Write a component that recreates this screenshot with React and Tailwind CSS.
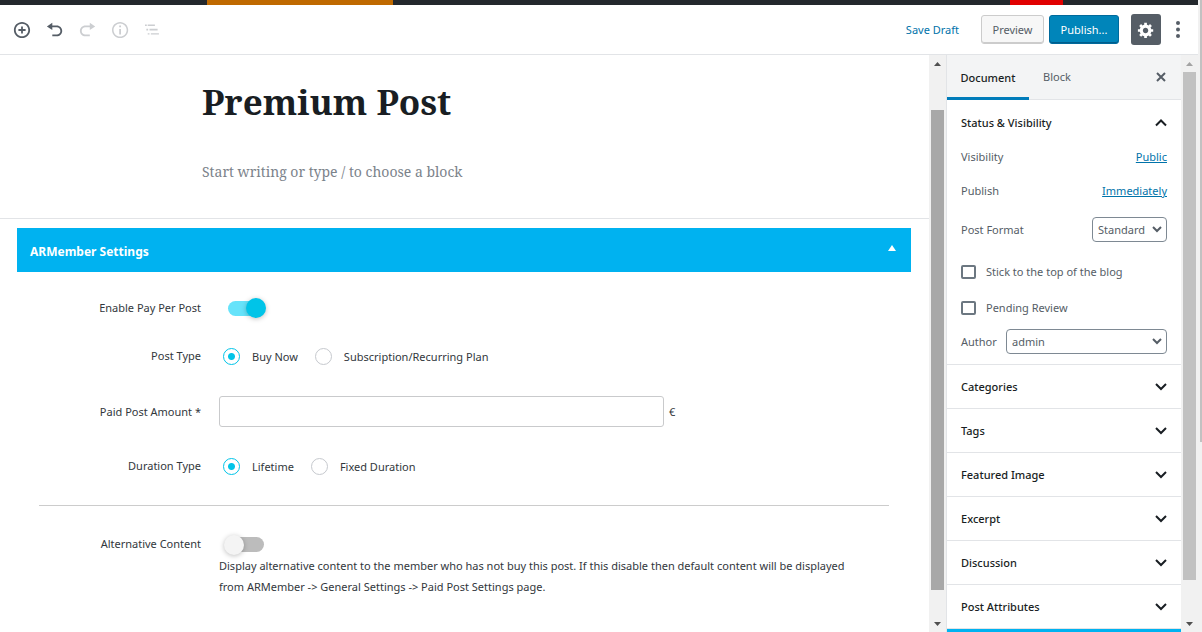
const topTools = [
  {
    label: "Add block",
    color: "text-[#555d66]",
    d: "M10 1c-5 0-9 4-9 9s4 9 9 9 9-4 9-9-4-9-9-9zm0 16c-3.9 0-7-3.1-7-7s3.1-7 7-7 7 3.1 7 7-3.1 7-7 7zm1-11H9v3H6v2h3v3h2v-3h3V9h-3V6z",
  },
  {
    label: "Undo",
    color: "text-[#555d66]",
    d: "M12 5H7V2L1 6l6 4V7h5c2.200 0 4 1.800 4 4s-1.800 4-4 4H7v2h5c3.300 0 6-2.700 6-6s-2.700-6-6-6z",
  },
  {
    label: "Redo",
    color: "text-[#ccced1]",
    d: "M7 5h5V2l6 4-6 4V7H7c-2.200 0-4 1.800-4 4s1.800 4 4 4h5v2H7c-3.300 0-6-2.700-6-6s2.700-6 6-6z",
  },
  {
    label: "Content structure",
    color: "text-[#ccced1]",
    d: "M9 1C4 1 0 5 0 10s4 9 9 9 9-4 9-9-4-9-9-9zm0 16.300c-4 0-7.300-3.300-7.300-7.300S5 2.700 9 2.700s7.300 3.300 7.300 7.300-3.300 7.300-7.300 7.300zM8 9h2v6H8zM8 5h2v2H8z",
  },
  {
    label: "Block navigation",
    color: "text-[#ccced1]",
    d: "M0 4h2v1.500H0zM3 4h8v1.500H3zM1.500 8.500h2v2h-2zM5 8.500h9v2H5zM3 13.500h2V15H3zM6.500 13.500h9V15h-9z",
  },
];

function ScrollBar({ thumb, upColor }) {
  return (
    <div aria-hidden="true" className="flex w-[17px] shrink-0 flex-col items-center bg-[#f1f1f1]">
      <svg viewBox="0 0 17 17" className={"h-[17px] w-[17px] shrink-0 " + upColor} fill="currentColor">
        <path d="M5 11h7L8.500 7z" />
      </svg>
      <div className="flex w-[13px] flex-1 flex-col">{thumb}</div>
      <svg viewBox="0 0 17 17" className="h-[17px] w-[17px] shrink-0 text-[#505050]" fill="currentColor">
        <path d="M5 7h7l-3.500 4z" />
      </svg>
    </div>
  );
}

function Chevron({ up }) {
  return (
    <svg viewBox="0 0 12 8" className="h-2 w-3" fill="none" stroke="currentColor" strokeWidth="2">
      <path d={up ? "M1 6.500l5-5 5 5" : "M1 1l5 5 5-5"} />
    </svg>
  );
}

function Row({ label, htmlFor, className, children }) {
  return (
    <div className={"flex " + className}>
      <label htmlFor={htmlFor} className="w-[201px] shrink-0 text-right">
        {label}
      </label>
      {children}
    </div>
  );
}

function Radio({ name, label, defaultChecked }) {
  return (
    <label className="flex items-center gap-3">
      <input
        type="radio"
        name={name}
        defaultChecked={defaultChecked}
        className="h-[17px] w-[17px] appearance-none rounded-full border border-[#c6c9ce] bg-white checked:border-[#00c4e8] checked:bg-[radial-gradient(circle,#00c4e8_0_3px,#ffffff_4px)]"
      />
      <span className="pt-px">{label}</span>
    </label>
  );
}

function Select({ id, value, className }) {
  return (
    <span className={"grid items-center " + className}>
      <select
        id={id}
        className="col-start-1 row-start-1 h-[25px] w-full appearance-none rounded border border-[#7e8993] bg-white px-[5px] text-[11px] text-[#555d66]"
      >
        <option>{value}</option>
      </select>
      <svg
        viewBox="0 0 10 7"
        className="pointer-events-none col-start-1 row-start-1 mr-[5px] h-[7px] w-[10px] justify-self-end text-[#555d66]"
        fill="none"
        stroke="currentColor"
        strokeWidth="2"
      >
        <path d="M1 1l4 4 4-4" />
      </svg>
    </span>
  );
}

const panels = ["Categories", "Tags", "Featured Image", "Excerpt", "Discussion", "Post Attributes"];

export default function App() {
  return (
    <div className="flex h-screen overflow-hidden bg-white font-['Noto_Sans','Open_Sans',sans-serif] text-[11px] leading-[20px] text-[#555d66]">
      <div className="flex min-w-0 flex-1 flex-col">
        <div className="flex h-[5px] shrink-0 bg-[#23282d]">
          <div className="ml-[207px] w-[186px] bg-[#bf6900]" />
          <div className="mr-[135px] ml-auto w-[53px] bg-[#e10000]" />
        </div>

        <header className="flex h-[50px] shrink-0 items-center border-b border-[#e2e4e7] pr-[15px] pl-3">
          <div className="flex gap-[13px]">
            {topTools.map((tool) => (
              <button key={tool.label} aria-label={tool.label} className={tool.color}>
                <svg viewBox="0 0 20 20" className="h-5 w-5 p-px" fill="currentColor">
                  <path d={tool.d} />
                </svg>
              </button>
            ))}
          </div>
          <div className="ml-auto flex items-center">
            <button className="mr-[22px] text-[#0073aa]">Save Draft</button>
            <button className="mr-[5px] h-[29px] w-[63px] rounded-[3px] border border-[#ccc] bg-[#f7f7f7] shadow-[inset_0_-1px_0_#ccc]">
              Preview
            </button>
            <button className="mr-3 h-[29px] w-[70px] rounded-[3px] border border-[#006a9c] bg-[#0085ba] text-white shadow-[inset_0_-1px_0_#005d8c]">
              Publish...
            </button>
            <button aria-label="Settings" className="mr-3 flex h-[31px] w-[30px] items-center justify-center rounded-[3px] bg-[#555d66] text-white">
              <svg viewBox="0 0 20 20" className="h-[18px] w-[18px]" fill="currentColor">
                <path d="M18 12h-2.180c-.170.700-.440 1.350-.810 1.930l1.540 1.540-2.100 2.100-1.540-1.540c-.580.360-1.230.630-1.910.790V19H8v-2.180c-.680-.160-1.330-.430-1.910-.790l-1.540 1.540-2.120-2.120 1.540-1.540c-.360-.580-.630-1.230-.790-1.910H1V9.030h2.170c.160-.700.440-1.350.800-1.940L2.430 5.550l2.100-2.100 1.540 1.540c.580-.370 1.240-.640 1.930-.810V2h3v2.180c.680.160 1.330.430 1.910.790l1.540-1.540 2.120 2.120-1.540 1.540c.360.590.640 1.240.800 1.940H18V12zm-8.500 1.500c1.660 0 3-1.340 3-3s-1.340-3-3-3-3 1.340-3 3 1.340 3 3 3z" />
              </svg>
            </button>
            <button aria-label="More tools" className="text-[#555d66]">
              <svg viewBox="0 0 10 20" className="h-5 w-[10px]" fill="currentColor">
                <circle cx="5" cy="3" r="2" />
                <circle cx="5" cy="9.500" r="2" />
                <circle cx="5" cy="16" r="2" />
              </svg>
            </button>
          </div>
        </header>

        <div className="flex min-h-0 flex-1">
          <main className="min-w-0 flex-1 overflow-hidden text-[#32373c]">
            <section className="h-[164px] border-b border-[#e2e4e7] pt-[23px] pl-[202px] font-['Noto_Serif','DejaVu_Serif',serif]">
              <h1 className="text-[35px] leading-[48px] font-bold text-[#191e23]">Premium Post</h1>
              <p className="mt-[34px] text-[14px] leading-[24px] text-[#7c838b]">
                Start writing or type / to choose a block
              </p>
            </section>

            <section className="mt-[9px] mr-[18px] ml-[17px]">
              <div className="flex h-[44px] items-center justify-between bg-[#00b2f0] pr-[15px] pl-[13px] text-white">
                <h2 className="pt-[3px] text-[12px] font-bold">ARMember Settings</h2>
                <button aria-label="Collapse ARMember Settings" className="pb-1">
                  <svg viewBox="0 0 8 6" className="h-[6px] w-2" fill="currentColor">
                    <path d="M0 6h8L4 0z" />
                  </svg>
                </button>
              </div>
            </section>

            <form>
              <Row label="Enable Pay Per Post" htmlFor="pay-per-post" className="mt-[26px]">
                <input
                  id="pay-per-post"
                  type="checkbox"
                  role="switch"
                  defaultChecked
                  className="ml-[27px] flex h-[15px] w-[36px] appearance-none items-center self-center rounded-full bg-[#bcbcbc] before:h-5 before:w-5 before:shrink-0 before:rounded-full before:bg-[#f4f4f4] before:shadow-[0_1px_5px_rgba(0,0,0,0.25)] checked:bg-[#66e3fa] checked:before:ml-[18px] checked:before:bg-[#00c4e8]"
                />
              </Row>
              <Row label="Post Type" className="mt-7">
                <div className="ml-[22px] flex gap-[17px]">
                  <Radio name="post-type" label="Buy Now" defaultChecked />
                  <Radio name="post-type" label="Subscription/Recurring Plan" />
                </div>
              </Row>
              <Row label="Paid Post Amount *" htmlFor="amount" className="mt-[29px] items-center">
                <input id="amount" type="text" className="ml-[18px] h-[31px] w-[445px] rounded-[3px] border border-[#c9cacc] px-2" />
                <span className="ml-[5px]">€</span>
              </Row>
              <Row label="Duration Type" className="mt-[29px]">
                <div className="ml-[22px] flex gap-[17px]">
                  <Radio name="duration" label="Lifetime" defaultChecked />
                  <Radio name="duration" label="Fixed Duration" />
                </div>
              </Row>
              <hr className="mt-7 mr-10 ml-[39px] border-[#cccccc]" />
              <Row label="Alternative Content" htmlFor="alt-content" className="mt-7">
                <div className="ml-[18px] pr-[60px]">
                  <div className="flex h-[21px] items-center pl-[9px]">
                    <input
                      id="alt-content"
                      type="checkbox"
                      role="switch"
                      className="flex h-[15px] w-[36px] appearance-none items-center rounded-full bg-[#bcbcbc] before:-ml-1 before:h-5 before:w-5 before:shrink-0 before:rounded-full before:bg-[#f4f4f4] before:shadow-[0_1px_5px_rgba(0,0,0,0.25)]"
                    />
                  </div>
                  <p className="leading-[21px]">
                    Display alternative content to the member who has not buy this post. If this disable then default
                    content will be displayed from ARMember -&gt; General Settings -&gt; Paid Post Settings page.
                  </p>
                </div>
              </Row>
            </form>
          </main>

          <ScrollBar upColor="text-[#505050]" thumb={<div className="mt-[38px] mb-[25px] flex-1 bg-[#a8a8a8]" />} />

          <aside className="flex w-[235px] shrink-0 flex-col overflow-hidden border-l border-[#e2e4e7] text-[#555d66]">
            <div className="flex h-[45px] shrink-0 border-b border-[#e2e4e7] bg-[#f3f4f5]">
              <button className="-mb-px w-[82px] border-b-[3px] border-[#007cba] pt-[3px] font-medium text-[#191e23]">Document</button>
              <button className="ml-[14px]">Block</button>
              <button aria-label="Close settings" className="mr-[15px] ml-auto">
                <svg viewBox="0 0 10 10" className="h-[10px] w-[10px]" stroke="currentColor" strokeWidth="2">
                  <path d="M1 1l8 8M9 1l-8 8" />
                </svg>
              </button>
            </div>

            <section className="shrink-0 border-b border-[#e2e4e7] pr-[14px] pb-[10px] pl-[14px]">
              <button className="flex h-[45px] w-full items-center justify-between text-[#191e23]">
                <span className="font-medium">Status &amp; Visibility</span>
                <Chevron up />
              </button>
              <div className="mt-[2px] flex justify-between">
                <span>Visibility</span>
                <a href="#visibility" className="text-[#0073aa] underline">Public</a>
              </div>
              <div className="mt-[14px] flex justify-between">
                <span>Publish</span>
                <a href="#publish" className="text-[#0073aa] underline">Immediately</a>
              </div>
              <div className="mt-4 flex items-center justify-between">
                <label htmlFor="format">Post Format</label>
                <Select id="format" value="Standard" className="w-[75px]" />
              </div>
              <label className="mt-5 flex items-center gap-[10px]">
                <input type="checkbox" className="h-[14px] w-[15px] appearance-none rounded-[2px] border-2 border-[#6c7781]" />
                Stick to the top of the blog
              </label>
              <label className="mt-4 flex items-center gap-[10px]">
                <input type="checkbox" className="h-[14px] w-[15px] appearance-none rounded-[2px] border-2 border-[#6c7781]" />
                Pending Review
              </label>
              <div className="mt-[11px] flex items-center">
                <label htmlFor="author" className="w-[45px]">Author</label>
                <Select id="author" value="admin" className="flex-1" />
              </div>
            </section>

            {panels.map((name) => (
              <button
                key={name}
                className="flex h-11 shrink-0 items-center justify-between border-b border-[#e2e4e7] px-[14px] font-medium text-[#191e23]"
              >
                {name}
                <Chevron />
              </button>
            ))}
            <div className="h-[3px] shrink-0 bg-[#00b2f0]" />
          </aside>

          <ScrollBar upColor="text-[#a3a3a3]" thumb={<div className="mb-[35px] flex-1 bg-[#c1c1c1]" />} />
        </div>
      </div>
      <div aria-hidden="true" className="flex w-1 shrink-0 justify-end bg-[#f1f1f1]">
        <div className="h-[70%] w-[2px] bg-[#c1c1c1]" />
      </div>
    </div>
  );
}
